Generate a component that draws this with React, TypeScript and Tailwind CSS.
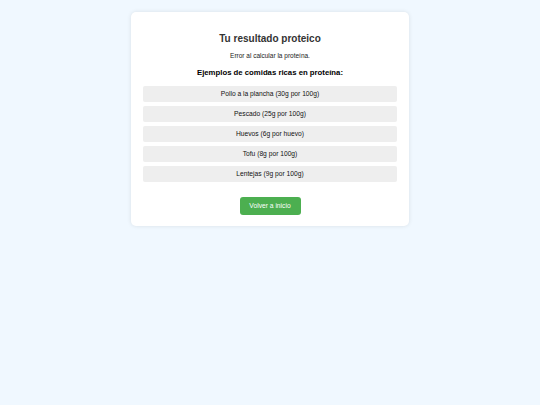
const foods = [
  "Pollo a la plancha (30g por 100g)",
  "Pescado (25g por 100g)",
  "Huevos (6g por huevo)",
  "Tofu (8g por 100g)",
  "Lentejas (9g por 100g)",
];

export default function App() {
  return (
    <div
      className="min-h-[405px] w-full bg-[#f0f8ff] pt-3"
      style={{ fontFamily: '"Liberation Sans", Arial, sans-serif' }}
    >
      <div className="mx-auto flex w-[278px] flex-col items-center rounded-[5px] bg-white px-3 pt-[21px] pb-[11px] shadow-[0_0_4px_rgba(0,0,0,0.1)]">
        <h2 className="text-[10px] leading-[12px] font-bold text-[#333]">Tu resultado proteico</h2>
        <p className="mt-[7px] text-[6.5px] leading-[8px] text-[#222]">Error al calcular la proteína.</p>
        <h3 className="mt-2 text-[7.75px] leading-[10px] font-bold text-black">
          Ejemplos de comidas ricas en proteína:
        </h3>
        <ul className="mt-2 flex w-full flex-col gap-1">
          {foods.map((food) => (
            <li
              key={food}
              className="flex h-4 items-center justify-center rounded-[2px] bg-[#eeeeee] text-[6.7px] text-[#111]"
            >
              {food}
            </li>
          ))}
        </ul>
        <button className="mt-[15px] flex h-[18px] w-[61px] items-center justify-center rounded-[3px] bg-[#4caf50] text-[6.7px] text-white">
          Volver a inicio
        </button>
      </div>
    </div>
  );
}
